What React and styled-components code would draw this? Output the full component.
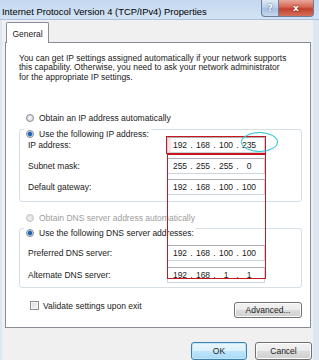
import React from 'react';
import styled, { createGlobalStyle, css } from 'styled-components';

const GlobalStyle = createGlobalStyle`
    html, body {
        margin: 0;
        padding: 0;
        background: #ffffff;
        overflow: hidden;
    }
    * {
        box-sizing: border-box;
    }
`;

const Window = styled.div`
    display: flex;
    flex-direction: column;
    width: 319px;
    height: 360px;
    overflow: hidden;
    background: #dde7f2;
    font-family: 'Liberation Sans', Arial, sans-serif;
    font-size: 8.5px;
    color: #1a1a1a;
`;

const TitleBar = styled.div`
    display: flex;
    align-items: flex-start;
    justify-content: space-between;
    height: 22px;
    padding-left: 2px;
    background: linear-gradient(#c3d8ef, #d3e3f4);
    border-bottom: 1px solid #a9c1de;
`;

const Title = styled.div`
    padding-top: 6px;
    font-size: 9.4px;
    color: #000;
    white-space: nowrap;
`;

const Captions = styled.div`
    display: flex;
    margin-right: 5px;
`;

const CaptionButton = styled.div`
    display: flex;
    align-items: center;
    justify-content: center;
    height: 17px;
    border: 1px solid #6a7f9c;
    border-top: none;
    font-family: 'DejaVu Sans', sans-serif;
    font-size: 9px;
    font-weight: bold;
    color: #ffffff;
    ${(p) =>
        p.$close
            ? css`
                  width: 35px;
                  border-radius: 0 0 4px 0;
                  border-left: none;
                  background: linear-gradient(#e9a99c, #d4644f 45%, #c2402c 55%, #d5705a);
                  text-shadow: 0 0 2px #6b1a10;
              `
            : css`
                  width: 18px;
                  border-radius: 0 0 0 4px;
                  background: linear-gradient(#dde9f6, #bcd1ea 45%, #a5bfdf 55%, #c6d9ee);
                  text-shadow: 0 0 2px #34506f;
              `}
`;

const Client = styled.div`
    display: flex;
    flex-direction: column;
    flex: 1;
    margin: 0 6px 0 2px;
    padding: 2px 2px 0 3px;
    background: #f0f0f0;
`;

const TabStrip = styled.div`
    display: flex;
    padding-left: 1px;
    margin-bottom: -1px;
    position: relative;
    z-index: 1;
`;

const Tab = styled.div`
    width: 43px;
    height: 21px;
    padding-top: 6px;
    text-align: center;
    background: #ffffff;
    border: 1px solid #898c95;
    border-bottom: none;
    border-radius: 2px 2px 0 0;
    color: #1a1a1a;
`;

const Panel = styled.div`
    position: relative;
    height: 286px;
    padding: 11px 0 0 13px;
    background: #ffffff;
    border: 1px solid #898c95;
`;

const Intro = styled.p`
    margin: 0;
    line-height: 9.4px;
    width: 272px;
`;

const RadioLine = styled.div`
    display: flex;
    align-items: center;
    gap: 5px;
    height: 11px;
    padding-left: 7px;
    margin-top: ${(p) => p.$top || 0}px;
    color: ${(p) => (p.$disabled ? '#9d9d9d' : '#1a1a1a')};
`;

const RadioDot = styled.span`
    display: inline-block;
    flex: none;
    width: 8px;
    height: 8px;
    border-radius: 50%;
    border: 1px solid ${(p) => (p.$disabled ? '#c2c2c2' : '#7f8a96')};
    background: ${(p) =>
        p.$checked
            ? 'radial-gradient(circle, #2b6fc4 0, #1d5aa8 1.6px, #8fb8e4 2.4px, #e9f1fa 3px)'
            : p.$disabled
            ? 'radial-gradient(circle, #f2f2f2, #dadada)'
            : 'radial-gradient(circle, #fbfbfb, #d2d2d2)'};
`;

const Group = styled.div`
    width: 283px;
    margin-top: ${(p) => p.$top}px;
    padding: 0 0 ${(p) => p.$bottom}px 8px;
    border: 1px solid #d5dfe5;
    border-radius: 3px;
`;

const Legend = styled.div`
    display: inline-flex;
    align-items: center;
    gap: 5px;
    height: 11px;
    margin: -6px 0 0 -4px;
    padding: 0 2px;
    background: #ffffff;
`;

const Rows = styled.div`
    display: flex;
    flex-direction: column;
    gap: ${(p) => p.$gap}px;
    margin-top: ${(p) => p.$top}px;
`;

const Row = styled.div`
    display: grid;
    grid-template-columns: 139px 98px;
    align-items: center;
    height: 16px;
`;

const IpField = styled.div`
    display: flex;
    align-items: center;
    height: 16px;
    padding-left: 2px;
    background: #ffffff;
    border: 1px solid #cbd3db;
    border-top-color: #abadb3;
    color: #1a1a1a;
    ${(p) =>
        p.$marked &&
        css`
            outline: 1px solid #c8161d;
            outline-offset: 0;
            background: linear-gradient(90deg, #fbe3e3 0, #fbe3e3 3px, #ffffff 3px);
        `}
`;

const Octet = styled.span`
    width: 20px;
    text-align: center;
`;

const Dot = styled.span`
    width: 3px;
    text-align: center;
`;

const Bottom = styled.div`
    display: flex;
    align-items: flex-start;
    justify-content: space-between;
    width: 283px;
    margin-top: 12px;
`;

const CheckLine = styled.label`
    display: flex;
    align-items: center;
    gap: 4px;
    height: 11px;
    padding-left: 11px;
`;

const CheckBox = styled.span`
    display: inline-block;
    width: 9px;
    height: 9px;
    border: 1px solid #8e8f8f;
    background: linear-gradient(135deg, #dcdcdc, #f7f7f7);
    box-shadow: inset 0 0 0 1px #f4f4f4;
`;

const Button = styled.button`
    height: ${(p) => p.$height || 16}px;
    width: ${(p) => p.$width}px;
    margin-top: ${(p) => p.$top || 0}px;
    padding: 0;
    font-family: 'Liberation Sans', Arial, sans-serif;
    font-size: 8.5px;
    color: #1a1a1a;
    border-radius: 3px;
    border: 1px solid ${(p) => (p.$default ? '#3c7fb1' : '#707070')};
    background: ${(p) =>
        p.$default
            ? 'linear-gradient(#eaf6fd, #d9f0fc 50%, #bee6fd 50%, #a7d9f5)'
            : 'linear-gradient(#f2f2f2, #ebebeb 50%, #dddddd 50%, #cfcfcf)'};
    box-shadow: inset 0 0 0 1px ${(p) => (p.$default ? '#c4e5f6' : '#fcfcfc')};
`;

const Footer = styled.div`
    display: flex;
    justify-content: flex-end;
    gap: 8px;
    padding: 14px 0 0;
    margin-right: -1px;
`;

const Mark = styled.div`
    position: absolute;
    left: 161px;
    top: 111px;
    width: 99px;
    height: 125px;
    border: 1px solid #c8161d;
    pointer-events: none;
`;

const Ellipse = styled.div`
    position: absolute;
    left: 235px;
    top: 89px;
    width: 37px;
    height: 20px;
    border: 1px solid #35c6dc;
    border-radius: 50%;
    pointer-events: none;
`;

function Address({ value, marked }) {
    const parts = value.split('.');
    return (
        <IpField $marked={marked}>
            {parts.map((part, i) => (
                <React.Fragment key={i}>
                    <Octet>{part}</Octet>
                    {i < parts.length - 1 && <Dot>.</Dot>}
                </React.Fragment>
            ))}
        </IpField>
    );
}

const ipRows = [
    ['IP address:', '192.168.100.235', true],
    ['Subnet mask:', '255.255.255.0'],
    ['Default gateway:', '192.168.100.100'],
];

const dnsRows = [
    ['Preferred DNS server:', '192.168.100.100'],
    ['Alternate DNS server:', '192.168.1.1'],
];

export default function App() {
    return (
        <>
            <GlobalStyle />
            <Window>
                <TitleBar>
                    <Title>Internet Protocol Version 4 (TCP/IPv4) Properties</Title>
                    <Captions>
                        <CaptionButton>?</CaptionButton>
                        <CaptionButton $close>x</CaptionButton>
                    </Captions>
                </TitleBar>

                <Client>
                    <TabStrip>
                        <Tab>General</Tab>
                    </TabStrip>

                    <Panel>
                        <Intro>
                            You can get IP settings assigned automatically if your network supports this
                            capability. Otherwise, you need to ask your network administrator for the
                            appropriate IP settings.
                        </Intro>

                        <RadioLine $top={30}>
                            <RadioDot />
                            Obtain an IP address automatically
                        </RadioLine>

                        <Group $top={6} $bottom={6}>
                            <Legend>
                                <RadioDot $checked />
                                Use the following IP address:
                            </Legend>
                            <Rows $gap={5} $top={-3}>
                                {ipRows.map(([label, value, marked]) => (
                                    <Row key={label}>
                                        <span>{label}</span>
                                        <Address value={value} marked={marked} />
                                    </Row>
                                ))}
                            </Rows>
                        </Group>

                        <RadioLine $top={10} $disabled>
                            <RadioDot $disabled />
                            Obtain DNS server address automatically
                        </RadioLine>

                        <Group $top={5} $bottom={4}>
                            <Legend>
                                <RadioDot $checked />
                                Use the following DNS server addresses:
                            </Legend>
                            <Rows $gap={6} $top={6}>
                                {dnsRows.map(([label, value]) => (
                                    <Row key={label}>
                                        <span>{label}</span>
                                        <Address value={value} />
                                    </Row>
                                ))}
                            </Rows>
                        </Group>

                        <Bottom>
                            <CheckLine>
                                <CheckBox />
                                Validate settings upon exit
                            </CheckLine>
                            <Button $width={68} $top={2}>
                                Advanced...
                            </Button>
                        </Bottom>

                        <Mark />
                        <Ellipse />
                    </Panel>

                    <Footer>
                        <Button $default $width={56} $height={18}>
                            OK
                        </Button>
                        <Button $width={57} $height={18}>
                            Cancel
                        </Button>
                    </Footer>
                </Client>
            </Window>
        </>
    );
}
